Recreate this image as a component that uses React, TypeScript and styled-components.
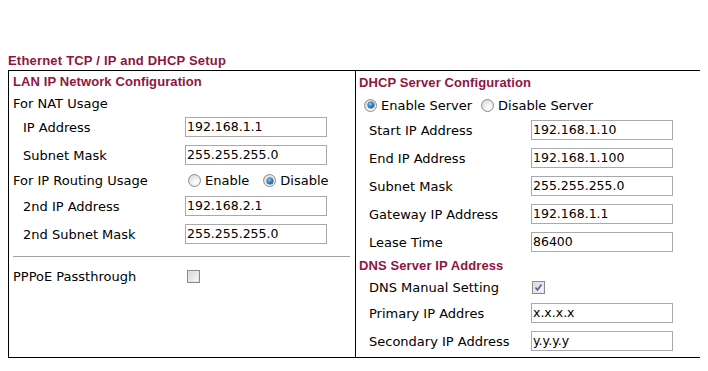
import React from "react";
import styled, { createGlobalStyle } from "styled-components";

const Global = createGlobalStyle`
  html, body { margin: 0; padding: 0; background: #fff; }
  body { margin: 8px; font-family: "DejaVu Sans", Verdana, sans-serif; }
`;

const HEAD = "#8f1541";

const Page = styled.div`
  padding-top: 44px;
  width: 694px;
`;

const Title = styled.div`
  font-family: "Liberation Sans", Arial, sans-serif;
  font-weight: bold;
  font-size: 13px;
  letter-spacing: 0.2px;
  color: ${HEAD};
  height: 18px;
  line-height: 18px;
`;

const Frame = styled.div`
  border: 1px solid #000;
  display: grid;
  grid-template-columns: 347px 345px;
`;

const Panel = styled.div<{ $divider?: boolean }>`
  box-sizing: border-box;
  border-right: ${(p) => (p.$divider ? "1px solid #000" : "none")};
  display: flex;
  flex-direction: column;
`;

const Row = styled.div<{ $h: number; $labelW: number }>`
  display: grid;
  grid-template-columns: ${(p) => p.$labelW}px auto;
  align-items: center;
  height: ${(p) => p.$h}px;
`;

const Heading = styled.div<{ $h: number; $pad: number }>`
  font-family: "Liberation Sans", Arial, sans-serif;
  font-weight: bold;
  font-size: 13px;
  letter-spacing: 0.1px;
  color: ${HEAD};
  height: ${(p) => p.$h}px;
  line-height: ${(p) => p.$h}px;
  padding-left: ${(p) => p.$pad}px;
`;

const Label = styled.div<{ $pad: number }>`
  font-size: 13px;
  color: #000;
  padding-left: ${(p) => p.$pad}px;
  white-space: nowrap;
`;

const TextInput = styled.div`
  box-sizing: border-box;
  width: 142px;
  height: 20px;
  border: 1px solid #a9a9a9;
  font-size: 12.5px;
  line-height: 18px;
  padding-left: 1px;
  color: #000;
  background: #fff;
`;

const Rule = styled.div`
  height: 1px;
  background: #a0a0a0;
  margin: 8px 5px 9px 4px;
`;

const RadioGroup = styled.div<{ $pad: number }>`
  display: flex;
  align-items: center;
  padding-left: ${(p) => p.$pad}px;
  font-size: 13px;
  color: #000;
`;

const RadioOption = styled.label<{ $after: number }>`
  display: inline-flex;
  align-items: center;
  gap: 4px;
  margin-right: ${(p) => p.$after}px;
  white-space: nowrap;
`;

const RadioDot = styled.span<{ $on?: boolean }>`
  position: relative;
  box-sizing: border-box;
  width: 13px;
  height: 13px;
  border-radius: 50%;
  border: 1px solid #8c8c8c;
  background: radial-gradient(circle at 65% 70%, #ffffff 0%, #f0f0f0 40%, #cfcfcf 100%);
  &::after {
    content: "";
    display: ${(p) => (p.$on ? "block" : "none")};
    position: absolute;
    left: 2.5px;
    top: 2.5px;
    width: 6px;
    height: 6px;
    border-radius: 50%;
    background: radial-gradient(circle at 40% 35%, #8fd0ff 0%, #1f7cc4 50%, #0b3e6e 100%);
    box-shadow: 0 0 0 0.5px #123a5c;
  }
`;

const CheckBox = styled.span<{ $on?: boolean; $ml: number }>`
  display: inline-flex;
  align-items: center;
  justify-content: center;
  box-sizing: border-box;
  width: 13px;
  height: 13px;
  margin-left: ${(p) => p.$ml}px;
  border: 1px solid #8a8a8a;
  background: linear-gradient(135deg, #d4d4d4 0%, #ececec 60%, #f8f8f8 100%);
  box-shadow: inset 0 0 0 1px #e6e6e6;
`;

const Check = () => (
  <svg width="9" height="9" viewBox="0 0 9 9">
    <path d="M1.5 4.5 L3.5 7 L7.5 1.5" fill="none" stroke="#4b5fa8" strokeWidth="1.6" />
  </svg>
);

const LEFT_W = 176;
const RIGHT_W = 175;

const Field = ({ label, value, labelW, pad }: { label: string; value: string; labelW: number; pad: number }) => (
  <Row $h={28} $labelW={labelW}>
    <Label $pad={pad}>{label}</Label>
    <TextInput>{value}</TextInput>
  </Row>
);

export default function App() {
  return (
    <Page>
      <Global />
      <Title>Ethernet TCP / IP and DHCP Setup</Title>
      <Frame>
        <Panel $divider>
          <Heading $h={22} $pad={4}>LAN IP Network Configuration</Heading>
          <Row $h={20} $labelW={LEFT_W}>
            <Label $pad={4}>For NAT Usage</Label>
          </Row>
          <Field label="IP Address" value="192.168.1.1" labelW={LEFT_W} pad={14} />
          <Field label="Subnet Mask" value="255.255.255.0" labelW={LEFT_W} pad={14} />
          <Row $h={23} $labelW={LEFT_W}>
            <Label $pad={4}>For IP Routing Usage</Label>
            <RadioGroup $pad={3}>
              <RadioOption $after={14}>
                <RadioDot />
                Enable
              </RadioOption>
              <RadioOption $after={0}>
                <RadioDot $on />
                Disable
              </RadioOption>
            </RadioGroup>
          </Row>
          <Field label="2nd IP Address" value="192.168.2.1" labelW={LEFT_W} pad={14} />
          <Field label="2nd Subnet Mask" value="255.255.255.0" labelW={LEFT_W} pad={14} />
          <Rule />
          <Row $h={20} $labelW={LEFT_W}>
            <Label $pad={4}>PPPoE Passthrough</Label>
            <CheckBox $ml={2} />
          </Row>
        </Panel>
        <Panel>
          <Heading $h={23} $pad={3}>DHCP Server Configuration</Heading>
          <Row $h={22} $labelW={RIGHT_W}>
            <RadioGroup $pad={8}>
              <RadioOption $after={9}>
                <RadioDot $on />
                Enable Server
              </RadioOption>
              <RadioOption $after={0}>
                <RadioDot />
                Disable Server
              </RadioOption>
            </RadioGroup>
          </Row>
          <Field label="Start IP Address" value="192.168.1.10" labelW={RIGHT_W} pad={13} />
          <Field label="End IP Address" value="192.168.1.100" labelW={RIGHT_W} pad={13} />
          <Field label="Subnet Mask" value="255.255.255.0" labelW={RIGHT_W} pad={13} />
          <Field label="Gateway IP Address" value="192.168.1.1" labelW={RIGHT_W} pad={13} />
          <Field label="Lease Time" value="86400" labelW={RIGHT_W} pad={13} />
          <Heading $h={20} $pad={3}>DNS Server IP Address</Heading>
          <Row $h={23} $labelW={RIGHT_W}>
            <Label $pad={13}>DNS Manual Setting</Label>
            <CheckBox $ml={1} $on>
              <Check />
            </CheckBox>
          </Row>
          <Field label="Primary IP Addres" value="x.x.x.x" labelW={RIGHT_W} pad={13} />
          <Field label="Secondary IP Address" value="y.y.y.y" labelW={RIGHT_W} pad={13} />
          <div style={{ height: 2 }} />
        </Panel>
      </Frame>
    </Page>
  );
}
